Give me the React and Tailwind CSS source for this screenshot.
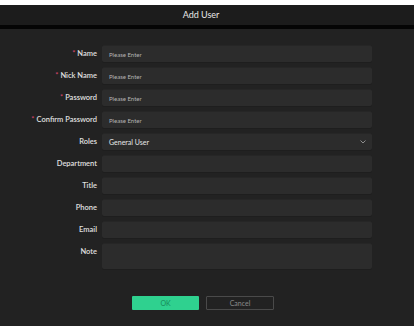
import React from 'react';

const fields = [
  { label: 'Name', required: true, placeholder: 'Please Enter' },
  { label: 'Nick Name', required: true, placeholder: 'Please Enter' },
  { label: 'Password', required: true, placeholder: 'Please Enter' },
  { label: 'Confirm Password', required: true, placeholder: 'Please Enter' },
  { label: 'Roles', select: 'General User' },
  { label: 'Department' },
  { label: 'Title' },
  { label: 'Phone' },
  { label: 'Email' },
  { label: 'Note', area: true },
];

function Field({ f }) {
  return (
    <div className="flex items-start gap-[5px] mb-[5px]">
      <div className="w-[97px] shrink-0 text-right leading-[17px] text-[7.5px] font-semibold text-[#e0e0e0]">
        {f.required && <span className="text-[#d9466f] mr-[2px] font-normal">*</span>}
        {f.label}
      </div>
      <div
        className={`w-[270px] ${f.area ? 'h-[26px]' : 'h-[17px]'} bg-[#2c2c2c] rounded-[2px] border-t border-[#262626] shadow-[0_1px_0_#1e1e1e] flex items-center px-[7px]`}
      >
        {f.placeholder && <span className="text-[6px] text-[#b4b4b4]">{f.placeholder}</span>}
        {f.select && (
          <>
            <span className="text-[7px] text-[#e8e8e8] flex-1">{f.select}</span>
            <svg width="6" height="4" viewBox="0 0 6 4" className="mr-[-1px]">
              <path d="M0.5 0.5 L3 3 L5.5 0.5" fill="none" stroke="#9a9a9a" strokeWidth="0.9" />
            </svg>
          </>
        )}
      </div>
    </div>
  );
}

export default function App() {
  return (
    <div className="w-[420px] h-[326px] bg-white pt-[5px] overflow-hidden" style={{ fontFamily: 'Lato, "Open Sans", sans-serif' }}>
      <div className="w-[414px] h-full bg-[#222222] flex flex-col">
        {/* Header */}
        <div className="h-[20px] bg-[#1c1c1c] flex items-center justify-center pr-[12px]">
          <span className="text-[9px] text-[#e8e8e8]">Add User</span>
        </div>
        <div className="h-[4px] bg-[#050505]" />

        {/* Form */}
        <div className="pt-[16px]">
          {fields.map((f) => (
            <Field key={f.label} f={f} />
          ))}
        </div>

        {/* Buttons */}
        <div className="flex gap-[7px] pl-[132px] mt-[22px]">
          <button className="w-[67px] h-[14px] bg-[#2fd18f] rounded-[1px] text-[7px] text-[#178a58] flex items-center justify-center">
            OK
          </button>
          <button className="w-[68px] h-[14px] border border-[#4a4a4a] rounded-[1px] text-[7px] text-[#8a8a8a] flex items-center justify-center">
            Cancel
          </button>
        </div>
      </div>
    </div>
  );
}
